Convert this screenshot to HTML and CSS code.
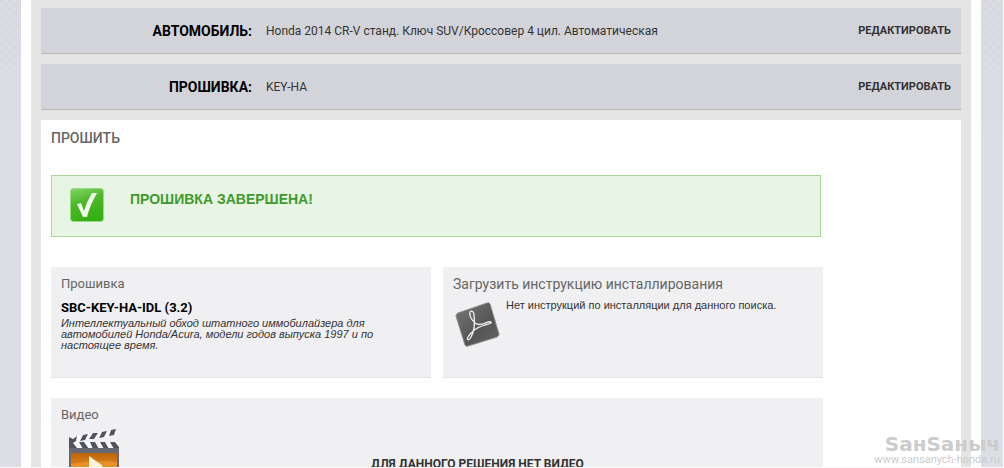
FILE: index.html
```html
<!DOCTYPE html>
<html lang="ru">
<head>
    <meta charset="UTF-8">
    <meta name="viewport" content="width=device-width, initial-scale=1.0">
    <title>Прошивка</title>
    <link rel="stylesheet" href="styles.css">
</head>
<body>
    <div class="page">
        <div class="content">
            <div class="step">
                <div class="step-label">АВТОМОБИЛЬ:</div>
                <div class="step-value">Honda 2014 CR-V станд. Ключ SUV/Кроссовер 4 цил. Автоматическая</div>
                <a href="#" class="step-edit">РЕДАКТИРОВАТЬ</a>
            </div>
            <div class="step">
                <div class="step-label">ПРОШИВКА:</div>
                <div class="step-value">KEY-HA</div>
                <a href="#" class="step-edit">РЕДАКТИРОВАТЬ</a>
            </div>

            <div class="flash">
                <h1 class="flash-title">ПРОШИТЬ</h1>

                <div class="success">
                    <svg class="success-icon" width="36" height="36" viewBox="0 0 36 36">
                        <defs>
                            <linearGradient id="green" x1="0" y1="0" x2="0.3" y2="1">
                                <stop offset="0" stop-color="#86d568"/>
                                <stop offset="0.45" stop-color="#4dba2b"/>
                                <stop offset="1" stop-color="#35b010"/>
                            </linearGradient>
                        </defs>
                        <rect x="1.5" y="1.5" width="33" height="33" rx="3" fill="url(#green)" stroke="#9bdb86"/>
                        <path d="M8 17 L12 16 L15 24 Q18 14 23 6 L28 6 Q21 18 18 30 L14 30 Z" fill="#f1fbed"/>
                    </svg>
                    <div class="success-text">ПРОШИВКА ЗАВЕРШЕНА!</div>
                </div>

                <div class="cards">
                    <div class="card">
                        <h2 class="card-title">Прошивка</h2>
                        <div class="firmware-name">SBC-KEY-HA-IDL (3.2)</div>
                        <div class="firmware-text">Интеллектуальный обход штатного иммобилайзера для автомобилей Honda/Acura, модели годов выпуска 1997 и по настоящее время.</div>
                    </div>
                    <div class="card">
                        <h2 class="card-title card-title-large">Загрузить инструкцию инсталлирования</h2>
                        <div class="guide">
                            <svg class="guide-icon" width="48" height="48" viewBox="0 0 48 48">
                                <defs>
                                    <linearGradient id="grey" x1="0" y1="0" x2="1" y2="1">
                                        <stop offset="0" stop-color="#777"/>
                                        <stop offset="0.6" stop-color="#555"/>
                                        <stop offset="1" stop-color="#666"/>
                                    </linearGradient>
                                </defs>
                                <path d="M5 12 L34 2 Q36 1 37 3 L46 33 Q46 35 44 36 L15 45 Q13 46 12 44 L3 15 Q3 13 5 12 Z" fill="url(#grey)" stroke="#8a8a8a" stroke-width="1"/>
                                <path d="M22 22 C18 18 16 14 17 11 C19 9 21 11 21 14 C22 22 22 29 18 36 C16 40 13 39 15 36 C18 31 25 26 32 24 C36 23 39 22 38 21 C35 19 28 27 22 22 Z" fill="none" stroke="#f2f2f2" stroke-width="1.3"/>
                            </svg>
                            <div class="guide-text">Нет инструкций по инсталляции для данного поиска.</div>
                        </div>
                    </div>
                </div>

                <div class="video">
                    <h2 class="card-title">Видео</h2>
                    <div class="video-row">
                        <svg class="video-icon" width="52" height="58" viewBox="0 0 52 58">
                            <defs>
                                <linearGradient id="orange" x1="0" y1="0" x2="0" y2="1">
                                    <stop offset="0" stop-color="#b9630b"/>
                                    <stop offset="0.5" stop-color="#e98a1d"/>
                                    <stop offset="1" stop-color="#c9700f"/>
                                </linearGradient>
                            </defs>
                            <path d="M1 8 L48 1 L49 6 L8 13 L51 13 L51 20 L1 20 Z" fill="#fafafa"/>
                            <path d="M1 8 L5 10 L9 7 L8 12 L5 14 L9 19 L1 20 Z" fill="#51535f"/>
                            <path d="M15 6 L20 5 L17 11 L12 12 Z M25 4 L30 4 L26 10 L21 10 Z M34 3 L39 2 L36 8 L31 9 Z M43 1 L48 0 L46 6 L41 7 Z" fill="#51535f"/>
                            <path d="M11 13 L16 13 L21 20 L15 20 Z M22 13 L27 13 L31 20 L25 20 Z M32 13 L37 13 L41 20 L36 20 Z M42 13 L47 13 L51 18 L51 20 L46 20 Z" fill="#51535f"/>
                            <rect x="1" y="19" width="50" height="39" fill="#666873"/>
                            <rect x="3" y="24" width="46" height="30" fill="url(#orange)"/>
                            <path d="M3 35 Q26 30 49 33 L49 38 Q26 34 3 40 Z" fill="#f3a13c" opacity="0.5"/>
                            <path d="M21 27 L35 37 L21 47 Z" fill="#fff4e2"/>
                        </svg>
                        <div class="video-text">ДЛЯ ДАННОГО РЕШЕНИЯ НЕТ ВИДЕО</div>
                    </div>
                </div>
            </div>
        </div>
    </div>

    <div class="watermark">
        <div class="watermark-name">SанSаныч</div>
        <div class="watermark-site">www.sansanych-honda.ru</div>
    </div>
</body>
</html>
```

FILE: styles.css
```css
* {
    margin: 0;
    padding: 0;
    box-sizing: border-box;
}

body {
    height: 100vh;
    overflow: hidden;
    position: relative;
    background:
        linear-gradient(rgba(220, 222, 229, 0.3), #dcdee5 140px),
        repeating-linear-gradient(45deg, #d4d6dc 0 3px, rgba(212, 214, 220, 0) 3px 6px),
        repeating-linear-gradient(-45deg, #d6d8df 0 3px, #dcdde3 3px 6px);
    border-right: 1px solid #fafafa;
    border-bottom: 1px solid #fafafa;
    font-family: Roboto, "Liberation Sans", sans-serif;
    font-size: 12px;
    color: #333;
}

.page {
    margin: 0 22px 0 21px;
    padding: 0 10px;
    background-color: #fff;
}

.content {
    padding: 8px 10px 0;
    background-color: #e4e4e4;
}

.step {
    display: flex;
    align-items: center;
    height: 46px;
    margin-bottom: 10px;
    padding-right: 10px;
    background-color: #d3d4d9;
    border-bottom: 1px solid #b5b7bb;
}

.step-label {
    width: 211px;
    font-size: 14px;
    font-weight: bold;
    text-align: right;
    color: #000;
}

.step-value {
    flex: 1;
    margin-left: 14px;
}

.step-edit {
    font-size: 11px;
    font-weight: bold;
    color: #333;
    text-decoration: none;
}

.flash {
    padding: 10px 138px 30px 10px;
    background-color: #fff;
}

.flash-title {
    margin-bottom: 29px;
    font-size: 14px;
    line-height: 16px;
    font-weight: 500;
    color: #666;
}

.success {
    display: flex;
    align-items: flex-start;
    height: 62px;
    margin: 0 2px 30px 0;
    padding: 11px 17px;
    background-color: #e8f5e5;
    border: 1px solid #a8d898;
}

.success-text {
    margin: 4px 0 0 25px;
    font-family: "Liberation Sans", sans-serif;
    font-size: 14px;
    line-height: 16px;
    font-weight: bold;
    color: #3f9a2c;
}

.cards {
    display: grid;
    grid-template-columns: 1fr 1fr;
    gap: 12px;
    margin-bottom: 20px;
}

.card,
.video {
    padding: 9px 10px;
    background-color: #f0f0f2;
    border-bottom: 1px solid #e2e2e4;
}

.card {
    height: 111px;
}

.card-title {
    font-size: 13px;
    line-height: 16px;
    font-weight: normal;
    color: #666;
}

.card-title-large {
    font-size: 14px;
}

.firmware-name {
    margin-top: 8px;
    font-size: 13px;
    line-height: 16px;
    font-weight: bold;
    color: #000;
}

.firmware-text {
    max-width: 330px;
    margin-top: 2px;
    font-family: "Liberation Sans", sans-serif;
    font-size: 11px;
    line-height: 11px;
    font-style: italic;
}

.guide {
    display: flex;
    gap: 5px;
    margin-top: 9px;
}

.guide-text {
    margin-top: -4px;
    font-family: "Liberation Sans", sans-serif;
    font-size: 11px;
    line-height: 16px;
}

.video-row {
    display: flex;
    margin: 6px 0 0 7px;
}

.video-text {
    flex: 1;
    margin-top: 27px;
    padding-left: 22px;
    line-height: 16px;
    font-weight: bold;
    text-align: center;
}

/* site mark over the lower right corner */
.watermark {
    position: absolute;
    right: 3px;
    bottom: 2px;
    text-align: right;
    color: #ccc;
}

.watermark-name {
    font-family: "DejaVu Sans", sans-serif;
    font-size: 20px;
    line-height: 20px;
    font-weight: bold;
}

.watermark-site {
    font-size: 11px;
    line-height: 11px;
}
```
